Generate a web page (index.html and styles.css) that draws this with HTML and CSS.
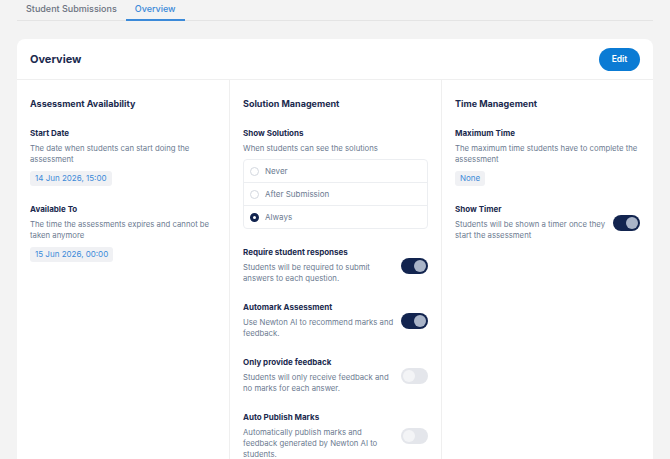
FILE: index.html
```html
<!DOCTYPE html>
<html lang="en">
<head>
  <meta charset="UTF-8">
  <title>Overview</title>
  <link rel="stylesheet" href="styles.css">
</head>
<body>

  <!-- Tabs -->
  <div class="tabs">
    <div class="tab">Student Submissions</div>
    <div class="tab active">Overview</div>
  </div>

  <div class="card">
    <div class="card-header">
      <h1>Overview</h1>
      <button class="edit-btn">Edit</button>
    </div>

    <div class="columns">
      <!-- Assessment Availability -->
      <div class="column">
        <h2>Assessment Availability</h2>

        <div class="field">
          <div class="label">Start Date</div>
          <div class="desc">The date when students can start doing the assessment</div>
          <span class="chip">14 Jun 2026, 15:00</span>
        </div>

        <div class="field">
          <div class="label">Available To</div>
          <div class="desc">The time the assessments expires and cannot be taken anymore</div>
          <span class="chip">15 Jun 2026, 00:00</span>
        </div>
      </div>

      <!-- Solution Management -->
      <div class="column">
        <h2>Solution Management</h2>

        <div class="field">
          <div class="label">Show Solutions</div>
          <div class="desc">When students can see the solutions</div>
          <div class="radio-group">
            <div class="radio-row"><span class="radio"></span>Never</div>
            <div class="radio-row"><span class="radio"></span>After Submission</div>
            <div class="radio-row"><span class="radio checked"></span>Always</div>
          </div>
        </div>

        <div class="field toggle-field">
          <div class="text">
            <div class="label">Require student responses</div>
            <div class="desc">Students will be required to submit answers to each question.</div>
          </div>
          <span class="toggle on"></span>
        </div>

        <div class="field toggle-field">
          <div class="text">
            <div class="label">Automark Assessment</div>
            <div class="desc">Use Newton AI to recommend marks and feedback.</div>
          </div>
          <span class="toggle on"></span>
        </div>

        <div class="field toggle-field">
          <div class="text">
            <div class="label">Only provide feedback</div>
            <div class="desc">Students will only receive feedback and no marks for each answer.</div>
          </div>
          <span class="toggle"></span>
        </div>

        <div class="field toggle-field">
          <div class="text">
            <div class="label">Auto Publish Marks</div>
            <div class="desc">Automatically publish marks and feedback generated by Newton AI to students.</div>
          </div>
          <span class="toggle"></span>
        </div>
      </div>

      <!-- Time Management -->
      <div class="column">
        <h2>Time Management</h2>

        <div class="field">
          <div class="label">Maximum Time</div>
          <div class="desc">The maximum time students have to complete the assessment</div>
          <span class="chip">None</span>
        </div>

        <div class="field toggle-field">
          <div class="text">
            <div class="label">Show Timer</div>
            <div class="desc">Students will be shown a timer once they start the assessment</div>
          </div>
          <span class="toggle on"></span>
        </div>
      </div>
    </div>
  </div>

</body>
</html>
```

FILE: styles.css
```css
body {
  margin: 0;
  padding: 0 17px;
  background: #f3f3f3;
  font-family: Inter, "Noto Sans", sans-serif;
  color: #1b2a4e;
}

.tabs {
  display: flex;
  height: 20px;
  border-bottom: 1px solid #e4e4e4;
}
.tab {
  padding: 3px 9px 0;
  font-size: 9px;
  font-weight: 500;
  color: #6b7280;
  line-height: 12px;
}
.tab.active {
  color: #3b8ad9;
  border-bottom: 2px solid #3b8ad9;
  margin-bottom: -1px;
}

.card {
  margin-top: 18px;
  background: #fff;
  border-radius: 8px;
  overflow: hidden;
}
.card-header {
  display: flex;
  align-items: center;
  justify-content: space-between;
  height: 40px;
  padding: 0 13px;
  border-bottom: 1px solid #efefef;
}
h1 {
  margin: 0;
  font-size: 11px;
  font-weight: 700;
}
.edit-btn {
  width: 41px;
  height: 23px;
  border: none;
  border-radius: 12px;
  background: #0b7bd4;
  color: #fff;
  font-family: inherit;
  font-size: 8.5px;
  font-weight: 600;
}

.columns {
  display: grid;
  grid-template-columns: 1fr 1fr 1fr;
}
.column {
  padding: 18px 13px 0;
  border-left: 1px solid #efefef;
  min-height: 400px;
}
.column:first-child {
  border-left: none;
}
h2 {
  margin: 0 0 18px;
  font-size: 9px;
  font-weight: 700;
  line-height: 12px;
}

.field {
  margin-bottom: 18px;
}
.label {
  font-size: 8px;
  font-weight: 700;
  line-height: 11px;
  margin-bottom: 4px;
}
.desc {
  font-size: 7.75px;
  line-height: 11px;
  color: #6b7a90;
}
.chip {
  display: inline-block;
  margin-top: 4px;
  padding: 0 5px;
  height: 15px;
  line-height: 15px;
  background: #f0f1f4;
  border-radius: 3px;
  font-size: 8px;
  color: #3b8ad9;
}

.radio-group {
  margin-top: 5px;
  border: 1px solid #eceef1;
  border-radius: 4px;
}
.radio-row {
  display: flex;
  align-items: center;
  gap: 6px;
  height: 22px;
  padding: 0 6px;
  font-size: 8px;
  color: #6b7a90;
  border-top: 1px solid #eceef1;
}
.radio-row:first-child {
  border-top: none;
}
.radio {
  width: 7px;
  height: 7px;
  border: 1px solid #d3d7de;
  border-radius: 50%;
}
.radio.checked {
  box-sizing: border-box;
  width: 9px;
  height: 9px;
  border: 3px solid #12244f;
  background: #fff;
}

.toggle-field {
  display: flex;
  align-items: center;
  gap: 6px;
}
.toggle-field .text {
  flex: 1;
}
.toggle {
  position: relative;
  flex: none;
  width: 27px;
  height: 16px;
  border-radius: 8px;
  background: #e4e6eb;
}
.toggle::after {
  content: "";
  position: absolute;
  top: 2px;
  left: 2px;
  width: 12px;
  height: 12px;
  border-radius: 50%;
  background: #f3f4f6;
}
.toggle.on {
  background: #12244f;
}
.toggle.on::after {
  left: 13px;
  background: #a9b4c8;
}
```
